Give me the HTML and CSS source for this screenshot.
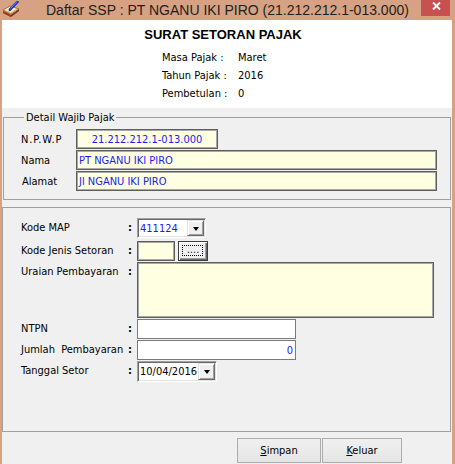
FILE: index.html
```html
<!DOCTYPE html>
<html>
<head>
<meta charset="utf-8">
<title>Daftar SSP</title>
<link rel="stylesheet" href="styles.css">
</head>
<body>
<div class="window">
  <div class="titlebar">
    <svg class="app-icon" width="18" height="16" viewBox="0 0 18 16">
      <polygon points="1,10 9,14 17,8 17,10 9,16 1,12" fill="#7a2c12"/>
      <polygon points="1,9 8,5 17,8 9,13" fill="#f6ecc0" stroke="#8a5a2a" stroke-width="0.8"/>
      <polyline points="3,9.5 8.5,12 15,8" fill="none" stroke="#c9a860" stroke-width="0.8"/>
      <polygon points="1,10 9,14 9,16 1,12" fill="#a23c18"/>
      <line x1="15.5" y1="0.8" x2="8" y2="8.5" stroke="#1f35b5" stroke-width="2.6" stroke-linecap="round"/>
      <line x1="15" y1="0.6" x2="8.5" y2="7.4" stroke="#8fa6ff" stroke-width="0.8"/>
      <polygon points="8,8.5 6.2,10.6 8.9,9.4" fill="#222"/>
    </svg>
    <span class="title">Daftar SSP : PT NGANU IKI PIRO (21.212.212.1-013.000)</span>
    <div class="close">
      <svg width="29" height="16" viewBox="0 0 29 16">
        <path d="M12 2.5 L19 9.5 M19 2.5 L12 9.5" stroke="#fff" stroke-width="1.8" fill="none"/>
      </svg>
    </div>
  </div>
  <div class="client">
    <div class="header">
      <div class="heading">SURAT SETORAN PAJAK</div>
      <div class="info">
        <span>Masa Pajak :</span><span>Maret</span>
        <span>Tahun Pajak :</span><span>2016</span>
        <span>Pembetulan :</span><span>0</span>
      </div>
    </div>

    <fieldset class="group">
      <legend>Detail Wajib Pajak</legend>
      <div class="grow">
        <span class="glabel npwp-label">N.P.W.P</span>
        <div class="field yellow npwp">21.212.212.1-013.000</div>
      </div>
      <div class="grow">
        <span class="glabel">Nama</span>
        <div class="field yellow wide">PT NGANU IKI PIRO</div>
      </div>
      <div class="grow">
        <span class="glabel alamat">Alamat</span>
        <div class="field yellow wide">Jl NGANU IKI PIRO</div>
      </div>
    </fieldset>

    <div class="panel">
      <div class="frow r-map">
        <span class="flabel">Kode MAP</span><span class="colon">:</span>
        <div class="combo map">
          <span class="combo-text blue">411124</span>
          <span class="drop"><i class="tri"></i></span>
        </div>
      </div>
      <div class="frow">
        <span class="flabel">Kode Jenis Setoran</span><span class="colon">:</span>
        <div class="field yellow jenis"></div>
        <div class="dots-btn">....</div>
      </div>
      <div class="frow">
        <span class="flabel">Uraian Pembayaran</span><span class="colon">:</span>
        <div class="field yellow uraian"></div>
      </div>
      <div class="frow">
        <span class="flabel">NTPN</span><span class="colon">:</span>
        <div class="field white mid"></div>
      </div>
      <div class="frow">
        <span class="flabel">Jumlah  Pembayaran</span><span class="colon">:</span>
        <div class="field white mid num">0</div>
      </div>
      <div class="frow">
        <span class="flabel">Tanggal Setor</span><span class="colon">:</span>
        <div class="combo date">
          <span class="combo-text">10/04/2016</span>
          <span class="drop"><i class="tri"></i></span>
        </div>
      </div>
    </div>

    <div class="actions">
      <button class="btn simpan"><u>S</u>impan</button>
      <button class="btn keluar"><u>K</u>eluar</button>
    </div>
  </div>
</div>
</body>
</html>
```
FILE: styles.css
```css
* { box-sizing: border-box; }
html, body { margin: 0; padding: 0; }
body {
  width: 455px;
  height: 464px;
  overflow: hidden;
  font-family: "DejaVu Sans Condensed", "Liberation Sans", sans-serif;
  font-size: 11px;
  color: #000;
}
.window {
  width: 455px;
  height: 464px;
  background: #d6a283;
  overflow: hidden;
}
.titlebar {
  height: 20px;
  display: flex;
  align-items: flex-start;
}
.app-icon {
  margin: 1px 0 0 2px;
  flex: none;
}
.title {
  margin-left: 26px;
  font-family: "Liberation Sans", sans-serif;
  font-size: 14px;
  line-height: 20px;
  color: #1e1e1e;
  white-space: nowrap;
}
.close {
  margin-left: auto;
  margin-right: 5px;
  width: 29px;
  height: 16px;
  background: #c75050;
  flex: none;
}
.close svg { display: block; }

.client {
  margin-left: 2px;
  width: 450px;
  height: 444px;
  background: #f0f0f0;
}
.header {
  height: 88px;
  background: #fff;
  padding-top: 7px;
  display: flex;
  flex-direction: column;
}
.heading {
  font-family: "Liberation Sans", sans-serif;
  font-weight: bold;
  font-size: 13px;
  line-height: 16px;
  text-align: center;
  padding-right: 8px;
}
.info {
  margin: 6px 0 0 160px;
  display: grid;
  grid-template-columns: 76px auto;
  line-height: 18px;
}

.group {
  margin: 3px 0 0 1px;
  width: 448px;
  padding: 5px 0 8px 17px;
  border: 1px solid #a0a0a0;
  display: flex;
  flex-direction: column;
  gap: 1px;
}
.group legend {
  margin-left: 3px;
  padding: 0 2px;
  line-height: 13px;
  font-size: 11px;
}
.grow {
  display: flex;
  align-items: center;
  height: 20px;
}
.glabel { width: 55px; flex: none; }
.npwp-label { letter-spacing: 0.8px; }
.glabel.alamat { padding-left: 1px; }

.field {
  height: 20px;
  border: 1px solid #5e5e5e;
  box-shadow: inset 1px 1px 0 #a8a8a8, inset -1px -1px 0 #a8a8a8;
  padding: 0 2px;
  display: flex;
  align-items: center;
  white-space: nowrap;
  color: #1c1cf0;
  flex: none;
}
.yellow { background: #ffffe1; }
.white { background: #fff; border-color: #7a7a7a; box-shadow: none; }
.npwp { width: 142px; justify-content: center; }
.wide { width: 361px; }
.jenis { width: 38px; }
.uraian { width: 297px; height: 56px; }
.mid { width: 159px; }
.num { justify-content: flex-end; }

.panel {
  margin-top: 7px;
  width: 449px;
  height: 225px;
  border: 1px solid #a0a0a0;
  padding: 10px 0 0 18px;
  display: flex;
  flex-direction: column;
  gap: 1px;
}
.frow {
  display: flex;
  align-items: flex-start;
}
.r-map { margin-bottom: 2px; }
.flabel {
  width: 107px;
  flex: none;
  padding-top: 3px;
  line-height: 14px;
  white-space: pre;
}
.colon {
  width: 9px;
  flex: none;
  padding-top: 3px;
  line-height: 14px;
  font-weight: bold;
}

.combo {
  height: 20px;
  display: flex;
  background: #fff;
  border: 1px solid;
  border-color: #a0a0a0 #fff #fff #a0a0a0;
  box-shadow: inset 1px 1px 0 #696969, inset -1px -1px 0 #e3e3e3;
  padding: 1px;
  flex: none;
}
.combo.map { width: 69px; }
.combo.date { width: 80px; height: 21px; }
.combo-text {
  flex: 1;
  padding-left: 1px;
  display: flex;
  align-items: center;
  white-space: nowrap;
}
.blue { color: #1c1cf0; }
.drop {
  width: 17px;
  flex: none;
  background: #f0f0f0;
  border: 1px solid;
  border-color: #e3e3e3 #696969 #696969 #e3e3e3;
  box-shadow: inset 1px 1px 0 #fff, inset -1px -1px 0 #a0a0a0;
  display: flex;
  align-items: center;
  justify-content: center;
}
.tri {
  display: block;
  width: 0;
  height: 0;
  border-left: 3.5px solid transparent;
  border-right: 3.5px solid transparent;
  border-top: 4px solid #000;
  margin-top: 1px;
}

.dots-btn {
  position: relative;
  margin-left: 3px;
  width: 30px;
  height: 20px;
  border: 1px solid #3c3c3c;
  background: #f0f0f0;
  box-shadow: inset 1px 1px 0 #fff, inset -1px -1px 0 #696969, inset -2px -2px 0 #a0a0a0;
  text-align: center;
  line-height: 16px;
  font-size: 11px;
  color: #101060;
  flex: none;
}
.dots-btn::after {
  content: "";
  position: absolute;
  left: 3px;
  top: 3px;
  right: 4px;
  bottom: 4px;
  border: 1px dotted #000;
}

.actions {
  margin: 6px 0 0 235px;
  display: flex;
  gap: 1px;
}
.btn {
  height: 25px;
  border: 1px solid #acacac;
  background: linear-gradient(#f0f0f0, #e5e5e5);
  font-family: "DejaVu Sans Condensed", "Liberation Sans", sans-serif;
  font-size: 11px;
  color: #000;
  padding: 0;
}
.btn u { text-underline-offset: 1px; }
.simpan { width: 84px; }
.keluar { width: 80px; }
```
